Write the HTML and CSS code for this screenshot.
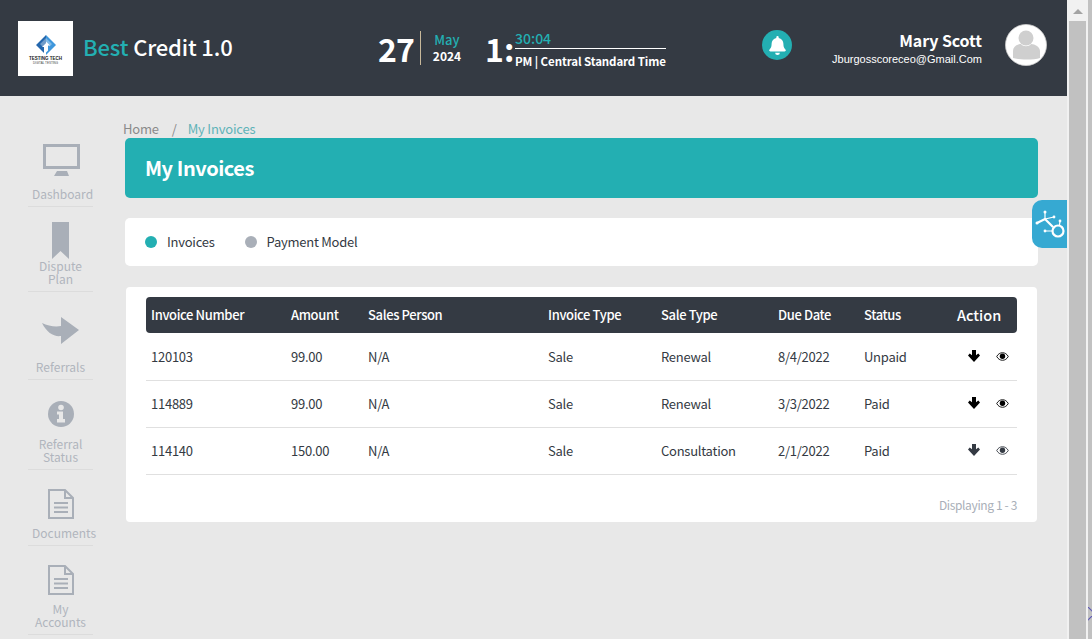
FILE: index.html
```html
<!DOCTYPE html>
<html lang="en">
<head>
<meta charset="utf-8">
<title>My Invoices</title>
<link rel="stylesheet" href="styles.css">
</head>
<body>
<div class="window">
  <div class="page">
    <header class="topbar">
      <div class="brand">
        <div class="logo">
          <svg class="logo-mark" viewBox="0 0 20 20" width="20" height="20"><path d="M10 0 20 10 10 20Z" fill="#3f97dc"/><path d="M10 0 0 10 8 18 8 12 6 12 10 8Z" fill="#2467ad"/><path d="M10 3 16 9 13.500 11.500 10 8 6.500 11.500 4 9Z" fill="#fff" opacity=".35"/><path d="M10 6.500 14 10.500 12 10.500 12 15.500 10 17.500Z" fill="#fff"/></svg>
          <div class="logo-name">TESTING TECH</div>
          <div class="logo-sub">DIGITAL TESTING</div>
        </div>
        <div class="brand-name"><span class="teal">Best</span> Credit 1.0</div>
      </div>
      <div class="clock">
        <div class="day">27</div>
        <div class="month-year"><div class="month">May</div><div class="year">2024</div></div>
        <div class="hour">1:</div>
        <div class="time-detail"><div class="minutes">30:04</div><div class="zone">PM | Central Standard Time</div></div>
      </div>
      <div class="bell">
        <svg viewBox="0 0 448 512" width="17" height="19"><path fill="#fff" d="M224 512a64 64 0 0 0 64-64H160a64 64 0 0 0 64 64zm215-150c-19-21-56-52-56-154 0-78-54-140-127-155V32a32 32 0 1 0-64 0v21C119 68 65 130 65 208c0 102-37 133-56 154-6 6-9 14-9 22 0 16 13 32 32 32h384c19 0 32-16 32-32 0-8-3-16-9-22z"/></svg>
      </div>
      <div class="user">
        <div class="user-name">Mary Scott</div>
        <div class="user-mail">Jburgosscoreceo@Gmail.Com</div>
      </div>
      <div class="avatar">
        <svg viewBox="0 0 42 42" width="42" height="42"><circle cx="21" cy="21" r="20.500" fill="#fff" stroke="#cfcfcf" stroke-width=".8"/><circle cx="21" cy="14" r="7.500" fill="#cfcfcf"/><path d="M8 34V27C8 23 12 20 16 20 18 23 24 23 26 20 30 20 35 23 35 27V34C29 36 14 36 8 34Z" fill="#cfcfcf"/></svg>
      </div>
    </header>
    <div class="body-row">
      <nav class="sidebar">
        <a class="nav-item nav-dash">
          <svg viewBox="0 0 38 33" width="38" height="33"><path fill="#a9afb8" d="M0 0H37V25H0ZM3 3V22H34V3ZM14 27H24L26 32H11Z" fill-rule="evenodd"/></svg>
          <span class="nav-label">Dashboard</span>
        </a>
        <a class="nav-item nav-dispute">
          <svg viewBox="0 0 17 37" width="17" height="37"><path fill="#a9afb8" d="M0 0H17V37L8.500 29 0 37Z"/></svg>
          <span class="nav-label">Dispute<br>Plan</span>
        </a>
        <a class="nav-item nav-ref">
          <svg viewBox="0 0 38 27" width="38" height="27"><path fill="#a9afb8" d="M19 0 37 13 19 27V19C12 20 5 16 0 6 6 9 13 10 19 9Z"/></svg>
          <span class="nav-label">Referrals</span>
        </a>
        <a class="nav-item nav-status">
          <svg viewBox="0 0 26 26" width="26" height="26"><circle cx="13" cy="13" r="13" fill="#a9afb8"/><circle cx="13" cy="6.500" r="2.800" fill="#e8e8e8"/><path fill="#e8e8e8" d="M9 10.500H15V18H17V21.500H9V18H11V13.500H9Z"/></svg>
          <span class="nav-label">Referral<br>Status</span>
        </a>
        <a class="nav-item nav-docs">
          <svg viewBox="0 0 26 30" width="26" height="30"><path fill="none" stroke="#a9afb8" stroke-width="2" d="M1 1H17L25 9V29H1ZM17 1V9H25"/><path stroke="#a9afb8" stroke-width="2" d="M6 14H20M6 18.500H20M6 23H20"/></svg>
          <span class="nav-label">Documents</span>
        </a>
        <a class="nav-item nav-acct">
          <svg viewBox="0 0 26 30" width="26" height="30"><path fill="none" stroke="#a9afb8" stroke-width="2" d="M1 1H17L25 9V29H1ZM17 1V9H25"/><path stroke="#a9afb8" stroke-width="2" d="M6 14H20M6 18.500H20M6 23H20"/></svg>
          <span class="nav-label">My<br>Accounts</span>
        </a>
      </nav>
      <main class="content">
        <div class="crumbs"><span>Home</span><span class="crumb-sep">/</span><span class="crumb-current">My Invoices</span></div>
        <h1 class="banner">My Invoices</h1>
        <div class="tabs">
          <div class="tab"><span class="dot dot-on"></span>Invoices</div>
          <div class="tab"><span class="dot dot-off"></span>Payment Model</div>
        </div>
        <section class="card">
          <table class="invoices">
            <colgroup>
              <col class="c1"><col class="c2"><col class="c3"><col class="c4"><col class="c5"><col class="c6"><col class="c7"><col class="c8">
            </colgroup>
            <thead>
              <tr><th>Invoice Number</th><th>Amount</th><th>Sales Person</th><th>Invoice Type</th><th>Sale Type</th><th>Due Date</th><th>Status</th><th class="th-action">Action</th></tr>
            </thead>
            <tbody>
              <tr><td>120103</td><td>99.00</td><td>N/A</td><td>Sale</td><td>Renewal</td><td>8/4/2022</td><td>Unpaid</td>
                <td><div class="actions">
                  <svg viewBox="0 0 12 12" width="12" height="12"><path fill="#000" d="M4 0H8V5.200L10.300 3.500 12 5.500 6 12 0 5.500 1.700 3.500 4 5.200Z"/></svg>
                  <svg viewBox="0 0 14 10" width="13" height="9"><path fill="none" stroke="#000" stroke-width="1" d="M.6 5C2 2.300 4.300 .8 7 .8S12 2.300 13.400 5C12 7.700 9.700 9.200 7 9.200S2 7.700 .6 5Z"/><circle cx="7" cy="4.800" r="3" fill="#000"/></svg>
                </div></td></tr>
              <tr><td>114889</td><td>99.00</td><td>N/A</td><td>Sale</td><td>Renewal</td><td>3/3/2022</td><td>Paid</td>
                <td><div class="actions">
                  <svg viewBox="0 0 12 12" width="12" height="12"><path fill="#000" d="M4 0H8V5.200L10.300 3.500 12 5.500 6 12 0 5.500 1.700 3.500 4 5.200Z"/></svg>
                  <svg viewBox="0 0 14 10" width="13" height="9"><path fill="none" stroke="#000" stroke-width="1" d="M.6 5C2 2.300 4.300 .8 7 .8S12 2.300 13.400 5C12 7.700 9.700 9.200 7 9.200S2 7.700 .6 5Z"/><circle cx="7" cy="4.800" r="3" fill="#000"/></svg>
                </div></td></tr>
              <tr><td>114140</td><td>150.00</td><td>N/A</td><td>Sale</td><td>Consultation</td><td>2/1/2022</td><td>Paid</td>
                <td><div class="actions">
                  <svg viewBox="0 0 12 12" width="12" height="12"><path fill="#343a43" d="M4 0H8V5.200L10.300 3.500 12 5.500 6 12 0 5.500 1.700 3.500 4 5.200Z"/></svg>
                  <svg viewBox="0 0 14 10" width="13" height="9"><path fill="none" stroke="#343a43" stroke-width="1" d="M.6 5C2 2.300 4.300 .8 7 .8S12 2.300 13.400 5C12 7.700 9.700 9.200 7 9.200S2 7.700 .6 5Z"/><circle cx="7" cy="4.800" r="3" fill="#343a43"/></svg>
                </div></td></tr>
            </tbody>
          </table>
          <div class="displaying">Displaying 1 - 3</div>
        </section>
      </main>
    </div>
    <div class="side-tab">
      <svg viewBox="0 0 30 30" width="30" height="30"><g stroke="#fff" fill="none"><path stroke-width="1.200" d="M10 3V10M10 10 19 8M25 12 24.500 16M10 22H17"/><path stroke-width="2.200" d="M2 14 10 10 18 18"/><circle cx="23" cy="22" r="5.500" stroke-width="2.200"/></g><g fill="#fff"><circle cx="10" cy="3" r="1.500"/><circle cx="2" cy="14" r="1.500"/><circle cx="19" cy="8" r="1.400"/><circle cx="25" cy="12" r="1.400"/><circle cx="10" cy="22" r="1.400"/></g></svg>
    </div>
  </div>
  <div class="scrollbar">
    <div class="arrow-up"></div>
    <div class="thumb"></div>
  </div>
  <div class="outer-bar"><span class="chev"></span></div>
</div>
</body>
</html>
```

FILE: styles.css
```css
* { box-sizing: border-box; }
html, body { margin: 0; height: 100%; overflow: hidden; }
body { font-family: "Noto Sans CJK SC", "Noto Sans", sans-serif; color: #343a43; background: #e8e8e8; }
.window { display: flex; width: 1092px; height: 639px; overflow: hidden; }
.page { position: relative; width: 1067px; flex: none; background: #e8e8e8; }
.teal { color: #23afb2; }

.topbar { height: 96px; background: #343a43; display: flex; align-items: center; color: #fff; }
.brand { display: flex; align-items: center; width: 378px; padding-left: 18px; flex: none; }
.logo { width: 55px; height: 55px; background: #fff; display: flex; flex-direction: column; align-items: center; padding-top: 14px; flex: none; }
.logo-mark { flex: none; }
.logo-name { font-size: 4.500px; line-height: 5px; font-weight: 700; color: #222; margin-top: 1px; white-space: nowrap; font-family: "Liberation Sans", sans-serif; }
.logo-sub { font-size: 3px; line-height: 4px; color: #444; white-space: nowrap; font-family: "Liberation Sans", sans-serif; }
.brand-name { font-size: 22px; line-height: 30px; font-weight: 500; margin-left: 10px; white-space: nowrap; margin-bottom: 4px; letter-spacing: -.15px; }

.clock { display: flex; align-items: center; width: 384px; flex: none; }
.day { font-size: 32px; font-weight: 700; line-height: 40px; width: 42px; flex: none; letter-spacing: -1px; }
.month-year { border-left: 1px solid #c8b89a; height: 34px; width: 52px; flex: none; text-align: center; padding-left: 1px; }
.month { font-size: 13px; line-height: 17px; color: #23afb2; font-weight: 500; }
.year { font-size: 12px; line-height: 16px; font-weight: 700; }
.hour { font-size: 32px; font-weight: 700; line-height: 40px; margin-left: 13px; width: 30px; flex: none; }
.time-detail { width: 151px; flex: none; margin-top: 6px; }
.minutes { font-size: 14px; line-height: 17px; color: #23afb2; font-weight: 500; border-bottom: 1px solid #fff; height: 19px; }
.zone { font-size: 11.500px; line-height: 24px; font-weight: 700; white-space: nowrap; letter-spacing: -.1px; }

.bell { width: 30px; height: 30px; border-radius: 50%; background: #23afb2; display: flex; align-items: center; justify-content: center; flex: none; margin-bottom: 6px; }
.user { width: 190px; text-align: right; flex: none; margin-top: 1px; }
.user-name { font-size: 16px; line-height: 21px; font-weight: 700; letter-spacing: -.1px; }
.user-mail { font-family: "Liberation Sans", sans-serif; font-size: 11px; line-height: 15px; margin-top: 1px; }
.avatar { width: 42px; height: 42px; margin-left: 23px; border-radius: 50%; flex: none; margin-bottom: 6px; }
.avatar svg { display: block; }

.body-row { display: flex; }
.sidebar { width: 125px; flex: none; padding: 48px 0 0 28px; }
.nav-item { display: flex; flex-direction: column; align-items: center; width: 65px; border-bottom: 1px solid #dcdcdc; text-align: center; }
.nav-item svg { flex: none; }
.nav-label { font-size: 12px; line-height: 13px; color: #b0b5bd; white-space: nowrap; }
.nav-dash { height: 63px; padding-left: 2px; }
.nav-dash .nav-label { margin: 10px 0 0 2px; }
.nav-dispute { height: 85px; padding-top: 15px; }
.nav-dispute .nav-label { margin-top: 0; }
.nav-ref { height: 88px; padding-top: 25px; }
.nav-ref .nav-label { margin-top: 16px; }
.nav-status { height: 90px; padding-top: 21px; }
.nav-status .nav-label { margin-top: 10px; }
.nav-docs { height: 76px; padding-top: 19px; }
.nav-docs .nav-label { margin: 7px 0 0 7px; }
.nav-acct { height: 89px; padding-top: 19px; }
.nav-acct .nav-label { margin-top: 7px; }

.content { width: 913px; flex: none; }
.crumbs { height: 42px; padding-top: 26px; margin-left: -2px; font-size: 13px; line-height: 14px; letter-spacing: -.2px; color: #8a8a8a; display: flex; }
.crumb-sep { margin: 0 11px 0 13px; }
.crumb-current { color: #5fb3b8; }
.banner { margin: 0; height: 60px; background: #23afb2; border-radius: 5px; color: #fff; font-size: 20px; letter-spacing: -.45px; font-weight: 700; line-height: 60px; padding-left: 20px; }
.tabs { margin-top: 20px; height: 48px; background: #fff; border-radius: 5px; display: flex; align-items: center; padding-left: 20px; gap: 30px; font-size: 13px; letter-spacing: -.25px; color: #343a43; }
.tab { display: flex; align-items: center; padding-bottom: 2px; }
.dot { width: 12px; height: 12px; border-radius: 50%; margin: 2px 10px 0 0; }
.dot-on { background: #23afb2; }
.dot-off { background: #a9afb8; }

.card { margin: 21px 1px 0; height: 235px; background: #fff; border-radius: 4px; padding: 10px 20px 0; }
.invoices { width: 871px; border-collapse: separate; border-spacing: 0; table-layout: fixed; font-size: 13px; letter-spacing: -.25px; }
.c1 { width: 140px; } .c2 { width: 77px; } .c3 { width: 180px; } .c4 { width: 113px; }
.c5 { width: 117px; } .c6 { width: 86px; } .c7 { width: 88px; } .c8 { width: 70px; }
.invoices th { height: 36px; background: #343a43; color: #fff; font-weight: 500; text-align: left; padding: 0 0 2px 5px; white-space: nowrap; letter-spacing: -.37px; }
.invoices th:first-child { border-radius: 4px 0 0 4px; }
.invoices th:last-child { border-radius: 0 4px 4px 0; }
.invoices .th-action { font-size: 14.500px; padding-left: 10px; letter-spacing: 0; }
.invoices td { height: 47px; border-bottom: 1px solid #e0e0e0; padding: 0 0 2px 5px; white-space: nowrap; }
.invoices tbody tr:first-child td { height: 48px; padding-bottom: 1px; }
.actions { display: flex; align-items: center; gap: 16px; padding-left: 16px; }
.actions svg { flex: none; }
.displaying { margin-top: 22px; text-align: right; font-size: 12px; line-height: 16px; letter-spacing: -.37px; color: #a9afb8; }

.side-tab { position: absolute; left: 1032px; top: 200px; width: 35px; height: 48px; background: #36a9d2; border-radius: 10px 0 0 10px; padding: 9px 0 0 3px; }
.side-tab svg { display: block; }

.scrollbar { width: 19px; flex: none; background: #f1f1f1; padding: 0 0 0 2px; }
.arrow-up { width: 0; height: 0; margin: 9px auto 7px; border-left: 5px solid transparent; border-right: 5px solid transparent; border-bottom: 5px solid #a3a3a3; }
.thumb { height: 618px; background: #c1c1c1; }
.outer-bar { width: 6px; flex: none; background: #c1c1c1; border-left: 2px solid #f1f1f1; position: relative; overflow: hidden; }
.chev { position: absolute; left: -6px; top: 608px; width: 11px; height: 11px; border-top: 1px solid #5a55b5; border-right: 1px solid #5a55b5; transform: rotate(45deg); }
```
